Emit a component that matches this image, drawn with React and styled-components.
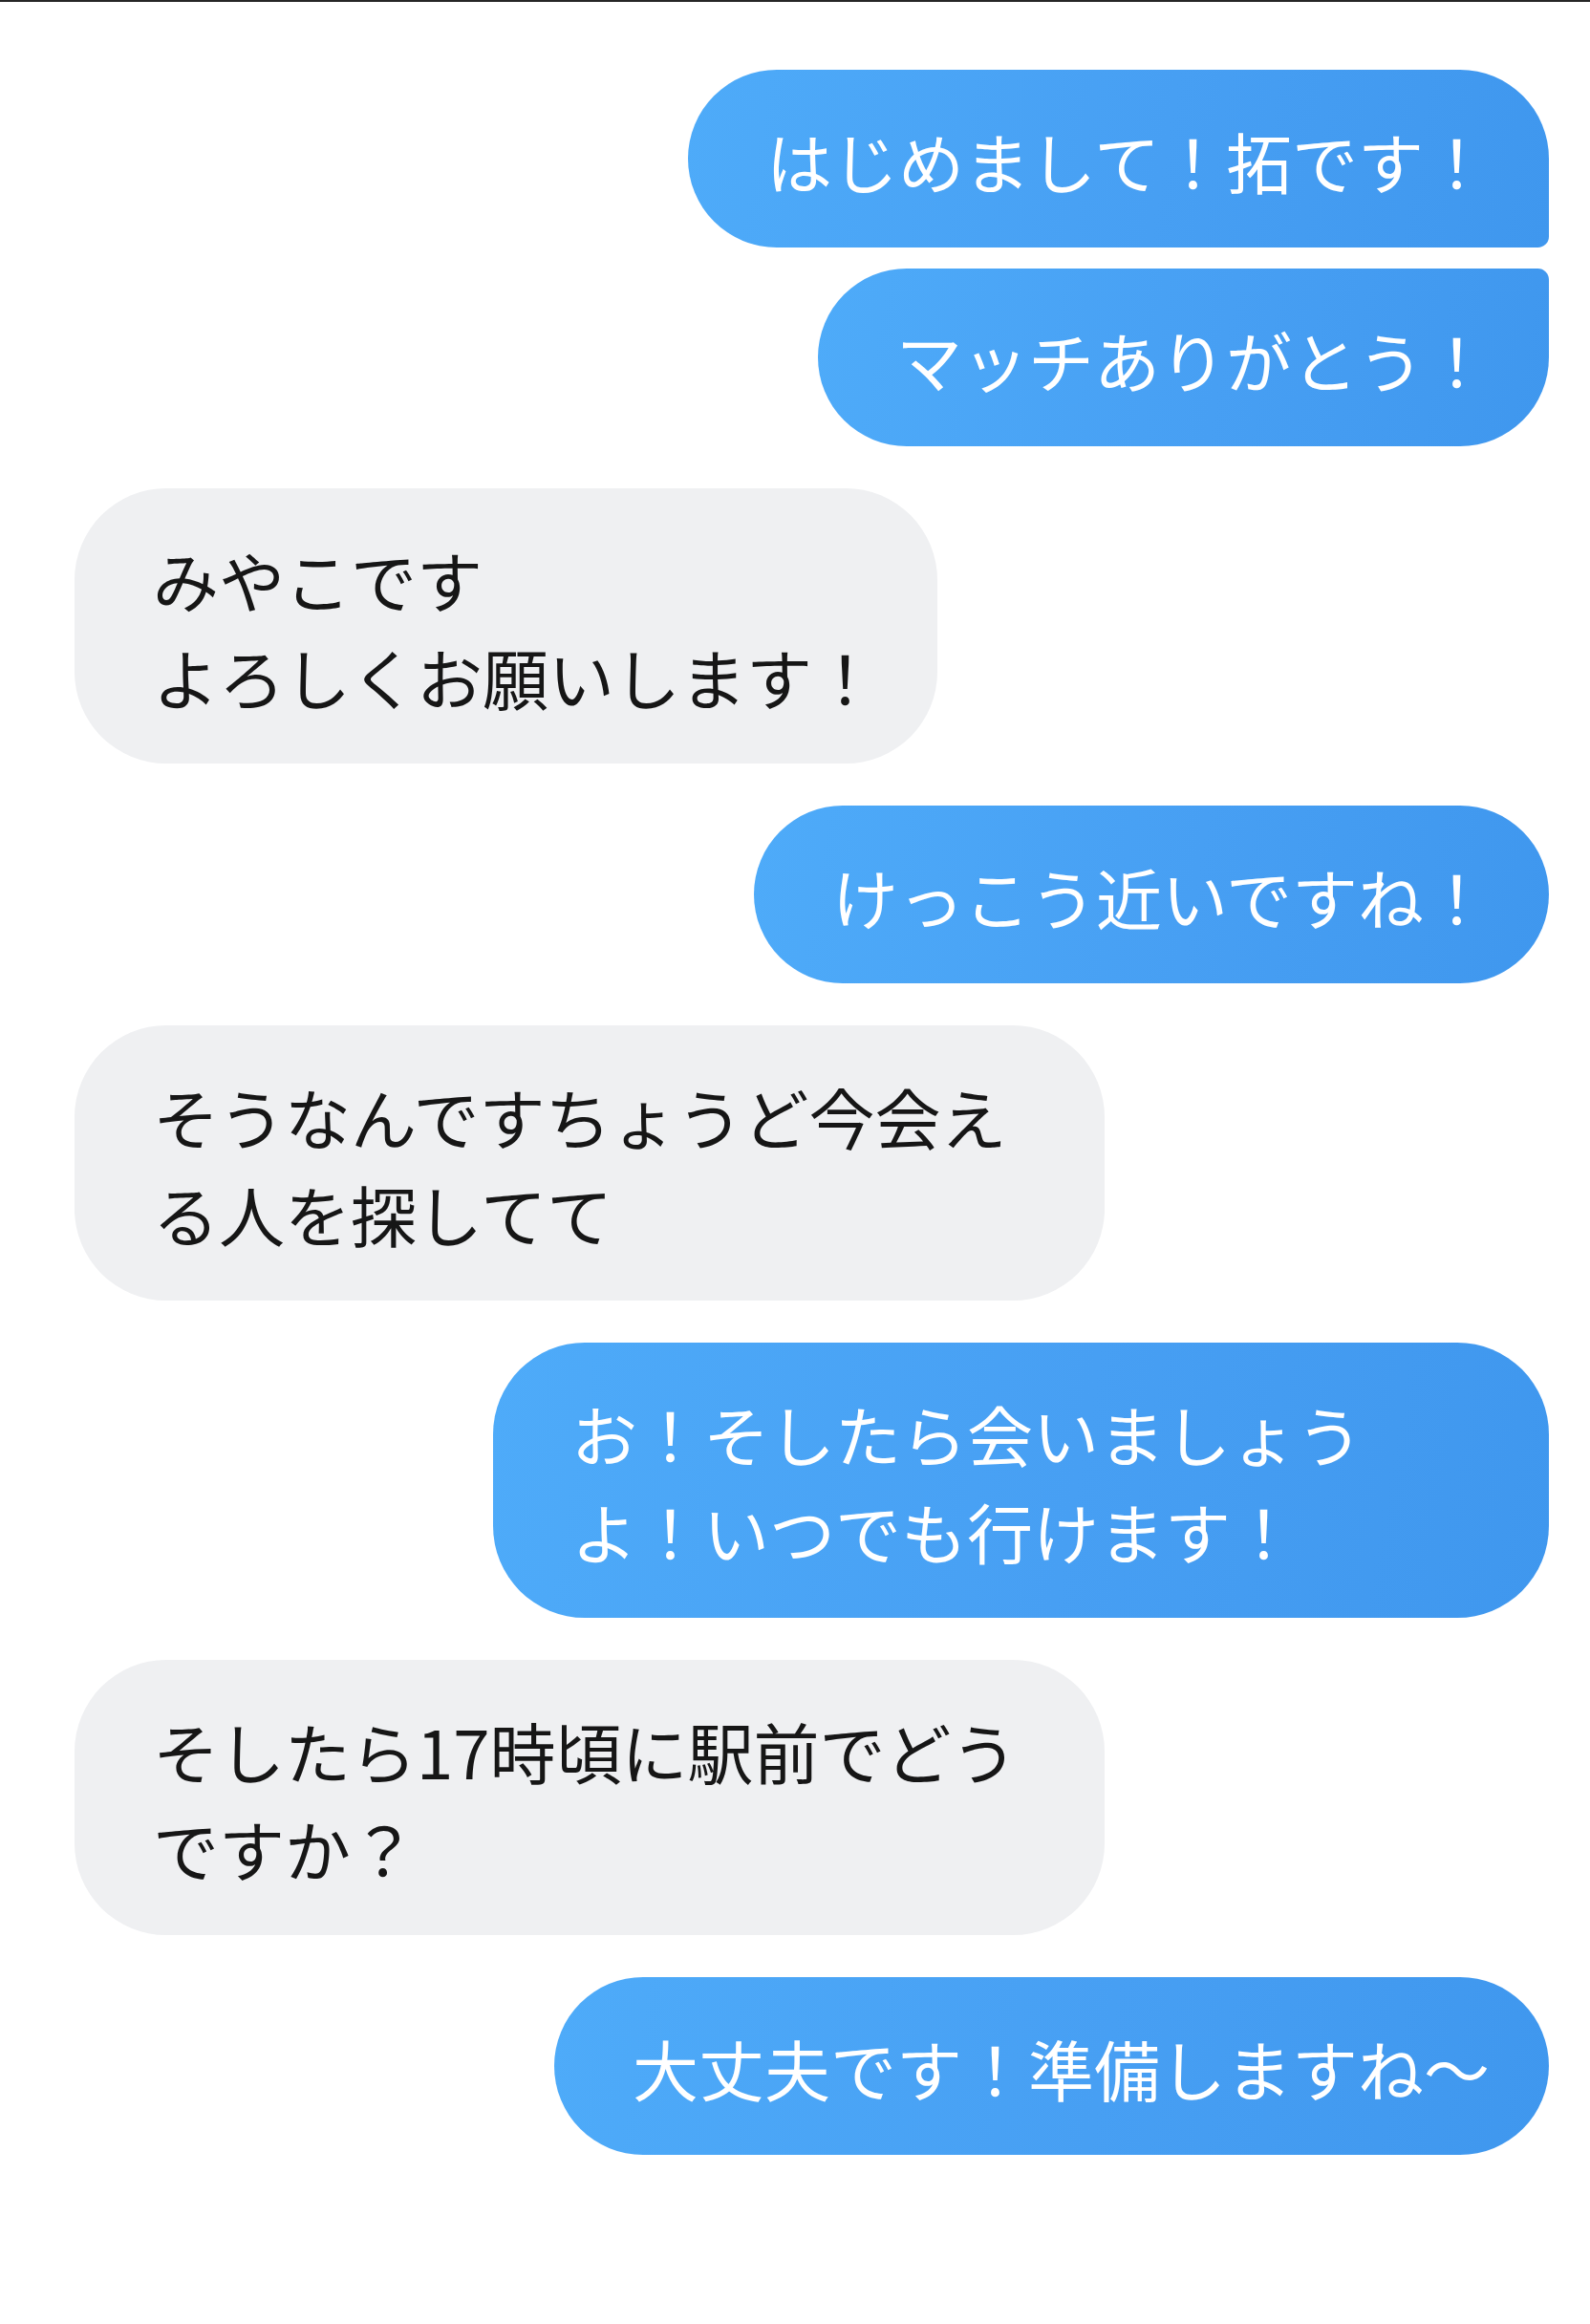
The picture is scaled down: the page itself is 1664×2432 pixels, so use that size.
import React from "react";
import styled, { createGlobalStyle, css } from "styled-components";

const GlobalStyle = createGlobalStyle`
  html, body {
    margin: 0;
    padding: 0;
    background: #ffffff;
  }
  body {
    font-family: "Noto Sans CJK JP", "Noto Sans", sans-serif;
  }
`;

const Screen = styled.div`
  min-height: 2432px;
  box-sizing: border-box;
  border-top: 2px solid #262626;
  background: #ffffff;
  padding: 71px 43px 0 78px;
`;

const Thread = styled.div`
  display: flex;
  flex-direction: column;
`;

const Group = styled.div`
  display: flex;
  flex-direction: column;
  align-items: ${(p) => (p.$mine ? "flex-end" : "flex-start")};
  gap: 22px;
  & + & {
    margin-top: 44px;
  }
`;

const Bubble = styled.div`
  box-sizing: border-box;
  max-width: ${(p) => (p.$mine ? "1105px" : "1078px")};
  padding: 44px 62px 40px 82px;
  border-radius: 96px;
  font-family: "Noto Sans CJK JP", "Noto Sans", sans-serif;
  font-size: 69px;
  font-weight: 400;
  letter-spacing: 0;
  line-height: 102px;
  white-space: pre-wrap;
  line-break: strict;
  ${(p) =>
    p.$mine
      ? css`
          background: linear-gradient(100deg, #4eabf9 0%, #479ff3 55%, #3f97ee 100%);
          color: #ffffff;
        `
      : css`
          background: #eff0f2;
          color: #161616;
        `}
  ${(p) =>
    p.$tail === "bottom" &&
    css`
      border-bottom-right-radius: 12px;
    `}
  ${(p) =>
    p.$tail === "top" &&
    css`
      border-top-right-radius: 12px;
    `}
`;

const groups = [
  {
    mine: true,
    messages: ["はじめまして！拓です！", "マッチありがとう！"],
  },
  { mine: false, messages: ["みやこです\nよろしくお願いします！"] },
  { mine: true, messages: ["けっこう近いですね！"] },
  { mine: false, messages: ["そうなんですちょうど今会える人を探してて"] },
  { mine: true, messages: ["お！そしたら会いましょうよ！いつでも行けます！"] },
  { mine: false, messages: ["そしたら17時頃に駅前でどうですか？"] },
  { mine: true, messages: ["大丈夫です！準備しますね〜"] },
];

function tailFor(index, count) {
  if (count < 2) return undefined;
  if (index === 0) return "bottom";
  if (index === count - 1) return "top";
  return "both";
}

export default function App() {
  return (
    <>
      <GlobalStyle />
      <Screen>
        <Thread>
          {groups.map((g, gi) => (
            <Group key={gi} $mine={g.mine}>
              {g.messages.map((m, mi) => (
                <Bubble
                  key={mi}
                  $mine={g.mine}
                  $tail={tailFor(mi, g.messages.length)}
                >
                  {m}
                </Bubble>
              ))}
            </Group>
          ))}
        </Thread>
      </Screen>
    </>
  );
}
